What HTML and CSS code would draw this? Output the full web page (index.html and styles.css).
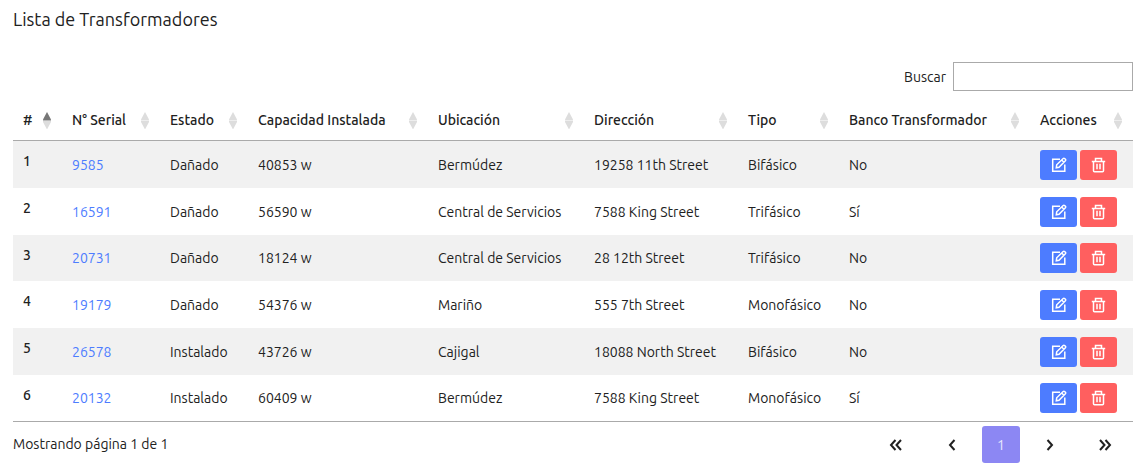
FILE: index.html
```html
<!DOCTYPE html>
<html lang="es">
<head>
<meta charset="utf-8">
<title>Lista de Transformadores</title>
<link rel="stylesheet" href="styles.css">
<script src="table.js" defer></script>
</head>
<body>
<svg class="symbols" aria-hidden="true">
  <symbol id="sort" viewBox="0 0 8 17"><path class="sort-up" d="M4 0l4.500 8.500h-9z"/><path class="sort-down" d="M-.5 9h9L4 17.500z"/></symbol>
  <symbol id="edit" viewBox="0 0 16 16"><path d="M9 2.200H1.700v12.100h12.100V7.500"/><path d="M5.300 10.700l.4-2.900 6.500-6.300q.7-.6 1.400 0l.8.800q.6.700 0 1.400l-6.400 6.500zM10.700 3l2.200 2.200"/></symbol>
  <symbol id="trash" viewBox="0 0 16 16"><path d="M.800 4.500h13.400M2.500 4.500v9.200q0 1 1 1h8q1 0 1-1V4.500M4.500 4.500V1.500h6v3M6 6.800v5.500M9 6.800v5.500"/></symbol>
</svg>
<main class="page">
  <h1 class="title">Lista de Transformadores</h1>
  <div class="search"><label for="search">Buscar</label><input class="search-input" id="search" type="search"></div>
  <table class="table">
    <colgroup><col class="c-num"><col class="c-serial"><col class="c-state"><col class="c-capacity"><col class="c-place"><col class="c-address"><col class="c-type"><col class="c-bank"><col class="c-actions"></colgroup>
    <thead><tr id="head"></tr></thead>
    <tbody id="rows"></tbody>
  </table>
  <footer class="footer">
    <span>Mostrando página 1 de 1</span>
    <nav class="pager" aria-label="Paginación">
      <button class="page-button" aria-label="Primera"><svg class="chevron" viewBox="0 0 16 16"><path d="M7.500 3L3 8l4.500 5M13 3L8.500 8l4.500 5"/></svg></button>
      <button class="page-button" aria-label="Anterior"><svg class="chevron" viewBox="0 0 16 16"><path d="M10.500 3L6 8l4.500 5"/></svg></button>
      <button class="page-button current" aria-current="page">1</button>
      <button class="page-button" aria-label="Siguiente"><svg class="chevron" viewBox="0 0 16 16"><path d="M5.500 3L10 8l-4.500 5"/></svg></button>
      <button class="page-button" aria-label="Última"><svg class="chevron" viewBox="0 0 16 16"><path d="M3 3l4.500 5L3 13M8.500 3L13 8l-4.500 5"/></svg></button>
    </nav>
  </footer>
</main>
</body>
</html>
```
FILE: styles.css
```css
* { box-sizing: border-box; }
body { margin: 0; background: #fff; color: #212121; font: 14px/20px Ubuntu, "Noto Sans", sans-serif; }
button, input { font: inherit; color: inherit; }
button { border: 0; padding: 0; background: none; cursor: pointer; }
.symbols { display: none; }
.page { padding: 8px 10px 8px 13px; }
.title { margin: 0; font-size: 18px; line-height: 22px; font-weight: 400; }
.search { display: flex; justify-content: flex-end; align-items: center; gap: 7px; margin-top: 32px; }
.search-input { width: 180px; height: 29px; border: 1px solid #aaa; border-radius: 0; padding: 4px; background: #fff; appearance: none; }
.table { width: 100%; margin-top: 9px; table-layout: fixed; border-collapse: separate; border-spacing: 0; border-bottom: 1px solid #aaa; }
.c-num { width: 49px; }
.c-serial { width: 98px; }
.c-state { width: 88px; }
.c-capacity { width: 180px; }
.c-place { width: 156px; }
.c-address { width: 154px; }
.c-type { width: 101px; }
.c-bank { width: 191px; }
.c-actions { width: 103px; }
.table th, .table td { padding: 0 0 0 10px; text-align: left; white-space: nowrap; }
.table th { font-weight: 500; }
.table thead th { height: 41px; border-bottom: 1px solid #aaa; padding-right: 11px; }
.sort-button { display: flex; align-items: center; justify-content: space-between; width: 100%; font-weight: 500; }
.sort-icon { flex: none; width: 8px; height: 17px; overflow: visible; fill: #ddd; }
.ascending .sort-icon { --up: #777; }
.sort-up { fill: var(--up, #ddd); }
.table tbody tr { height: 47px; }
.table tbody tr:nth-child(3n) { height: 46px; }
.table tbody tr:nth-child(odd) { background: #f1f1f1; }
.table tbody th { vertical-align: top; padding-top: 10px; }
.link { color: #4d7cff; text-decoration: none; }
.actions { display: flex; gap: 3px; }
.action { display: flex; align-items: center; justify-content: center; width: 37px; height: 30px; border-radius: 3px; color: #fff; }
.action svg { width: 16px; height: 16px; fill: none; stroke: currentColor; stroke-width: 1.5; }
.edit { background: #4d7cff; }
.delete { background: #ff5f5f; }
.footer { display: flex; align-items: flex-start; justify-content: space-between; padding-top: 4px; }
.footer > span { padding-top: 8px; }
.pager { display: flex; gap: 11px; padding-right: 9px; }
.page-button { display: flex; align-items: center; justify-content: center; width: 38px; height: 37px; border-radius: 3px; }
.page-button:first-child { margin-right: 7px; }
.page-button:last-child { margin-left: 6px; }
.current { background: #8c87f3; color: #e8e7fd; }
.chevron { width: 16px; height: 16px; fill: none; stroke: currentColor; stroke-width: 2; }
```
FILE: table.js
```js
const columns = ["#", "N° Serial", "Estado", "Capacidad Instalada", "Ubicación", "Dirección", "Tipo", "Banco Transformador", "Acciones"];
const transformers = [
  ["9585", "Dañado", "40853 w", "Bermúdez", "19258 11th Street", "Bifásico", "No"],
  ["16591", "Dañado", "56590 w", "Central de Servicios", "7588 King Street", "Trifásico", "Sí"],
  ["20731", "Dañado", "18124 w", "Central de Servicios", "28 12th Street", "Trifásico", "No"],
  ["19179", "Dañado", "54376 w", "Mariño", "555 7th Street", "Monofásico", "No"],
  ["26578", "Instalado", "43726 w", "Cajigal", "18088 North Street", "Bifásico", "No"],
  ["20132", "Instalado", "60409 w", "Bermúdez", "7588 King Street", "Monofásico", "Sí"]
];
document.getElementById("head").innerHTML = columns.map((name, i) =>
  `<th scope="col"${i ? "" : ' class="ascending" aria-sort="ascending"'}><button class="sort-button">${name}<svg class="sort-icon" aria-hidden="true"><use href="#sort"/></svg></button></th>`).join("");
document.getElementById("rows").innerHTML = transformers.map(([serial, ...cells], i) =>
  `<tr><th scope="row">${i + 1}</th><td><a class="link" href="#">${serial}</a></td>${cells.map(text => `<td>${text}</td>`).join("")}
  <td><div class="actions"><button class="action edit" aria-label="Editar"><svg><use href="#edit"/></svg></button><button class="action delete" aria-label="Eliminar"><svg><use href="#trash"/></svg></button></div></td></tr>`).join("");
```
